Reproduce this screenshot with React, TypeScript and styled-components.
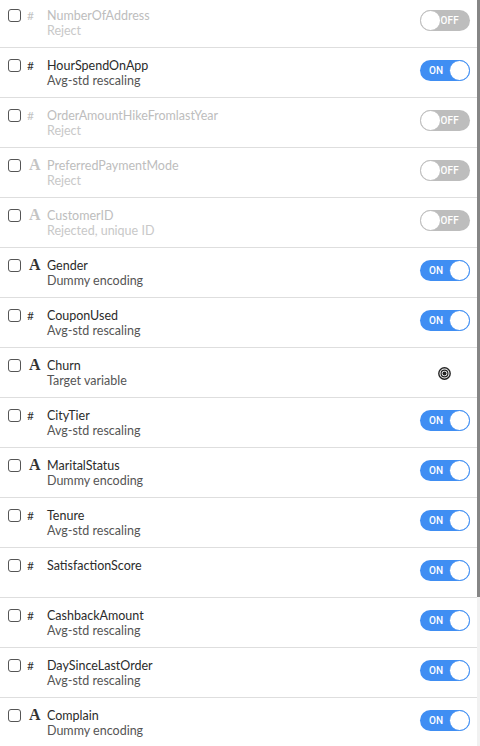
import React from "react";
import styled, { createGlobalStyle } from "styled-components";

const Global = createGlobalStyle`
  html, body { margin: 0; padding: 0; background: #fff; }
  body { font-family: "Source Sans Pro", Lato, "Open Sans", sans-serif; overflow: hidden; }
`;

const Page = styled.div`
  height: 746px;
  width: 480px;
  display: flex;
  overflow: hidden;
`;

const List = styled.div`
  flex: 1;
  margin-top: -2px;
  display: flex;
  flex-direction: column;
  overflow: hidden;
`;

const ScrollTrack = styled.div`
  width: 3px;
  flex: none;
  background: #f1f1f1;
  display: flex;
  flex-direction: column;
`;

const Thumb = styled.div`
  height: 597px;
  background: #858585;
`;

const Row = styled.div`
  height: 49px;
  flex: none;
  border-bottom: 1px solid #dedede;
  display: flex;
  align-items: flex-start;
  padding: 0 6px 0 8px;
`;

const Check = styled.span`
  box-sizing: border-box;
  width: 13px;
  height: 13px;
  margin-top: 11px;
  border: 1.5px solid #555;
  border-radius: 3px;
  background: #fff;
  flex: none;
`;

const TypeIcon = styled.span<{ $kind: "num" | "text"; $off: boolean }>`
  width: 26px;
  box-sizing: border-box;
  padding-left: ${(p) => (p.$kind === "text" ? "8px" : "6px")};
  margin-top: ${(p) => (p.$kind === "text" ? "9px" : "10px")};
  flex: none;
  color: ${(p) => (p.$off ? "#c4c4c4" : "#333")};
  font-family: ${(p) =>
    p.$kind === "text" ? '"Liberation Serif", "DejaVu Serif", serif' : 'Lato, "Liberation Sans", sans-serif'};
  font-weight: ${(p) => (p.$kind === "text" ? 700 : 400)};
  font-size: ${(p) => (p.$kind === "text" ? "16px" : "12px")};
  line-height: 16px;
`;

const Texts = styled.div`
  flex: 1;
  padding-top: 10px;
  display: flex;
  flex-direction: column;
`;

const Name = styled.div<{ $off: boolean }>`
  font-size: 12.5px;
  line-height: 15px;
  color: ${(p) => (p.$off ? "#bdbdbd" : "#2b2b2b")};
`;

const Sub = styled.div<{ $off: boolean }>`
  font-size: 12.5px;
  line-height: 15px;
  color: ${(p) => (p.$off ? "#c8c8c8" : "#555")};
`;

const Right = styled.div`
  width: 52px;
  height: 49px;
  display: flex;
  align-items: center;
  justify-content: center;
  padding-bottom: 5px;
  box-sizing: border-box;
`;

const Toggle = styled.div<{ $on: boolean }>`
  position: relative;
  width: 50px;
  height: 21px;
  border-radius: 11px;
  background: ${(p) => (p.$on ? "#3f8ef3" : "#bdbdbd")};
  display: flex;
  align-items: center;
  justify-content: ${(p) => (p.$on ? "flex-start" : "flex-end")};
  padding: ${(p) => (p.$on ? "0 0 0 9px" : "0 11px 0 0")};
  box-sizing: border-box;
  color: #fff;
  font-family: Roboto, "Liberation Sans", sans-serif;
  font-size: 10px;
  font-weight: 500;
  letter-spacing: 0.2px;
`;

const Knob = styled.span<{ $on: boolean }>`
  position: absolute;
  top: 0;
  ${(p) => (p.$on ? "right: 0;" : "left: 0;")}
  width: 21px;
  height: 21px;
  box-sizing: border-box;
  border-radius: 50%;
  background: #fff;
  border: 1px solid ${(p) => (p.$on ? "#3f8ef3" : "#bdbdbd")};
`;

const TargetIcon = styled.svg`
  margin-top: 6px;
  margin-right: 2px;
`;

const Target = () => (
  <TargetIcon width="13" height="13" viewBox="0 0 13 13">
    <circle cx="6.5" cy="6.5" r="5.7" fill="none" stroke="#222" strokeWidth="1.4" />
    <circle cx="6.5" cy="6.5" r="3.4" fill="none" stroke="#222" strokeWidth="1.2" />
    <circle cx="6.5" cy="6.5" r="2" fill="#222" />
  </TargetIcon>
);

type Item = {
  name: string;
  sub?: string;
  kind: "num" | "text";
  state: "on" | "off" | "target";
};

const items: Item[] = [
  { name: "NumberOfAddress", sub: "Reject", kind: "num", state: "off" },
  { name: "HourSpendOnApp", sub: "Avg-std rescaling", kind: "num", state: "on" },
  { name: "OrderAmountHikeFromlastYear", sub: "Reject", kind: "num", state: "off" },
  { name: "PreferredPaymentMode", sub: "Reject", kind: "text", state: "off" },
  { name: "CustomerID", sub: "Rejected, unique ID", kind: "text", state: "off" },
  { name: "Gender", sub: "Dummy encoding", kind: "text", state: "on" },
  { name: "CouponUsed", sub: "Avg-std rescaling", kind: "num", state: "on" },
  { name: "Churn", sub: "Target variable", kind: "text", state: "target" },
  { name: "CityTier", sub: "Avg-std rescaling", kind: "num", state: "on" },
  { name: "MaritalStatus", sub: "Dummy encoding", kind: "text", state: "on" },
  { name: "Tenure", sub: "Avg-std rescaling", kind: "num", state: "on" },
  { name: "SatisfactionScore", kind: "num", state: "on" },
  { name: "CashbackAmount", sub: "Avg-std rescaling", kind: "num", state: "on" },
  { name: "DaySinceLastOrder", sub: "Avg-std rescaling", kind: "num", state: "on" },
  { name: "Complain", sub: "Dummy encoding", kind: "text", state: "on" },
];

export default function App() {
  return (
    <>
      <Global />
      <Page>
        <List>
          {items.map((it) => {
            const off = it.state === "off";
            return (
              <Row key={it.name}>
                <Check />
                <TypeIcon $kind={it.kind} $off={off}>
                  {it.kind === "num" ? "#" : "A"}
                </TypeIcon>
                <Texts>
                  <Name $off={off}>{it.name}</Name>
                  {it.sub && <Sub $off={off}>{it.sub}</Sub>}
                </Texts>
                <Right>
                  {it.state === "target" ? (
                    <Target />
                  ) : (
                    <Toggle $on={it.state === "on"}>
                      {it.state === "on" ? "ON" : "OFF"}
                      <Knob $on={it.state === "on"} />
                    </Toggle>
                  )}
                </Right>
              </Row>
            );
          })}
        </List>
        <ScrollTrack>
          <Thumb />
        </ScrollTrack>
      </Page>
    </>
  );
}
